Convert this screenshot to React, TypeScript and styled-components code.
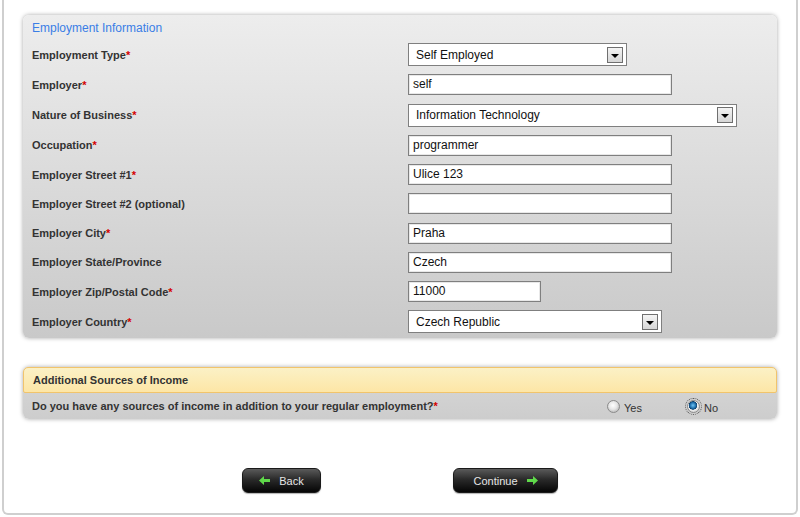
import styled, { createGlobalStyle } from "styled-components";

const GlobalStyle = createGlobalStyle`
    html, body {
        margin: 0;
        padding: 0;
        background: #ffffff;
        font-family: "Liberation Sans", Arial, sans-serif;
    }
`

const Frame = styled.div`
    margin: 0 2px;
    height: 515px;
    box-sizing: border-box;
    border: 2px solid #cfcfcf;
    border-top: none;
    border-radius: 0 0 6px 6px;
    padding: 15px 19px 0 19px;
    display: flex;
    flex-direction: column;
`

const Panel = styled.section`
    border-radius: 6px;
    box-shadow: 0 0 4px rgba(0, 0, 0, 0.35);
    background: linear-gradient(#ededed, #c9c9c9);
    padding: 0 0 5px 0;
`

const PanelTitle = styled.h2`
    margin: 0;
    padding: 5px 9px 6px 9px;
    height: 17px;
    font-size: 12px;
    font-weight: normal;
    color: #3a7ee6;
    line-height: 17px;
`

const FormGrid = styled.div`
    display: flex;
    flex-direction: column;
    gap: 8.25px;
    padding-left: 9px;
`

const FieldRow = styled.div`
    display: flex;
    align-items: center;
`

const Label = styled.label`
    width: 376px;
    flex-shrink: 0;
    font-size: 11px;
    font-weight: bold;
    color: #333333;
`

const Req = styled.span`
    color: #d40000;
`

const TextBox = styled.div<{ $width: number }>`
    width: ${p => p.$width}px;
    height: 21px;
    box-sizing: border-box;
    border: 1px solid #7f7f7f;
    box-shadow: inset 0 0 0 1px #e8e8e8;
    background: #ffffff;
    font-size: 12px;
    color: #111;
    padding: 0 4px;
    line-height: 19px;
`

const SelectBox = styled.div<{ $width: number }>`
    width: ${p => p.$width}px;
    height: 23px;
    box-sizing: border-box;
    border: 1px solid #7f7f7f;
    background: #ffffff;
    display: flex;
    align-items: center;
    justify-content: space-between;
    padding: 0 3px 0 7px;
    font-size: 12px;
    color: #111;
`

const DropButton = styled.span`
    width: 16px;
    height: 16px;
    box-sizing: border-box;
    border: 1px solid #6f6f6f;
    background: linear-gradient(#f4f4f4, #d6d6d6);
    display: flex;
    align-items: center;
    justify-content: center;
    &::after {
        content: "";
        margin-top: 2px;
        border-left: 4px solid transparent;
        border-right: 4px solid transparent;
        border-top: 4px solid #000;
    }
`

const IncomePanel = styled.section`
    margin-top: 29px;
    border-radius: 6px;
    box-shadow: 0 0 4px rgba(0, 0, 0, 0.35);
    background: linear-gradient(#d8d8d8, #cdcdcd);
`

const IncomeHeader = styled.div`
    height: 26px;
    box-sizing: border-box;
    border: 1px solid #f1c46c;
    border-radius: 5px 5px 2px 2px;
    background: linear-gradient(#fbf1c6, #fde6a6);
    padding: 0 9px;
    display: flex;
    align-items: center;
    font-size: 11px;
    font-weight: bold;
    color: #333;
`

const QuestionRow = styled.div`
    height: 26px;
    display: flex;
    align-items: center;
    padding: 0 9px;
    font-size: 11px;
    font-weight: bold;
    color: #333;
`

const Question = styled.span`
    flex: 1;
`

const RadioGroup = styled.div`
    display: flex;
    align-items: center;
    gap: 45px;
    margin-right: 50px;
    margin-top: 3px;
`

const RadioOption = styled.label`
    display: flex;
    align-items: center;
    gap: 4px;
    font-size: 11px;
    font-weight: normal;
    color: #333;
`

const RadioDot = styled.span<{ $checked: boolean }>`
    width: 13px;
    height: 13px;
    box-sizing: border-box;
    border-radius: 50%;
    border: 1px solid #8a8a8a;
    background: ${p => p.$checked
        ? "radial-gradient(circle at 45% 40%, #6fc4f5 0, #1a6aa8 3px, #0d3f6b 4px, #f2f2f2 4.5px, #dcdcdc 6px)"
        : "radial-gradient(circle at 45% 40%, #ffffff 0, #e6e6e6 4px, #c9c9c9 6px)"};
    outline: ${p => p.$checked ? "1px dotted #555" : "none"};
    outline-offset: 1px;
    margin-top: -3px;
`

const ButtonBar = styled.div`
    margin-top: 49px;
    display: flex;
    justify-content: center;
    gap: 132px;
`

const NavButton = styled.button<{ $width: number }>`
    width: ${p => p.$width}px;
    height: 25px;
    border: 1px solid #1a1a1a;
    border-radius: 6px;
    background: linear-gradient(#5a5a5a 0%, #2a2a2a 45%, #050505 100%);
    box-shadow: 0 1px 1px rgba(0, 0, 0, 0.3);
    color: #e6e6e6;
    font-family: "Liberation Sans", Arial, sans-serif;
    font-size: 11px;
    display: flex;
    align-items: center;
    justify-content: center;
    gap: 9px;
    padding: 0;
`

const Arrow = ({ dir }: { dir: "left" | "right" }) => (
    <svg width="11" height="9" viewBox="0 0 11 9">
        <path
            d={dir === "left" ? "M0 4.5 L5 0 V3 H11 V6 H5 V9 Z" : "M11 4.5 L6 0 V3 H0 V6 H6 V9 Z"}
            fill="#5fd94a"
        />
    </svg>
)

type Field = {
    label: string;
    required?: boolean;
    value: string;
    kind: "text" | "select";
    width: number;
}

const fields: Field[] = [
    { label: "Employment Type", required: true, value: "Self Employed", kind: "select", width: 219 },
    { label: "Employer", required: true, value: "self", kind: "text", width: 264 },
    { label: "Nature of Business", required: true, value: "Information Technology", kind: "select", width: 329 },
    { label: "Occupation", required: true, value: "programmer", kind: "text", width: 264 },
    { label: "Employer Street #1", required: true, value: "Ulice 123", kind: "text", width: 264 },
    { label: "Employer Street #2 (optional)", value: "", kind: "text", width: 264 },
    { label: "Employer City", required: true, value: "Praha", kind: "text", width: 264 },
    { label: "Employer State/Province", value: "Czech", kind: "text", width: 264 },
    { label: "Employer Zip/Postal Code", required: true, value: "11000", kind: "text", width: 133 },
    { label: "Employer Country", required: true, value: "Czech Republic", kind: "select", width: 254 },
]

function App() {
    return (
        <>
            <GlobalStyle />
            <Frame>
                <Panel>
                    <PanelTitle>Employment Information</PanelTitle>
                    <FormGrid>
                        {fields.map((f) => (
                            <FieldRow key={f.label}>
                                <Label>
                                    {f.label}
                                    {f.required && <Req>*</Req>}
                                </Label>
                                {f.kind === "select" ? (
                                    <SelectBox $width={f.width}>
                                        {f.value}
                                        <DropButton />
                                    </SelectBox>
                                ) : (
                                    <TextBox $width={f.width}>{f.value}</TextBox>
                                )}
                            </FieldRow>
                        ))}
                    </FormGrid>
                </Panel>

                <IncomePanel>
                    <IncomeHeader>Additional Sources of Income</IncomeHeader>
                    <QuestionRow>
                        <Question>
                            Do you have any sources of income in addition to your regular employment?<Req>*</Req>
                        </Question>
                        <RadioGroup>
                            <RadioOption><RadioDot $checked={false} />Yes</RadioOption>
                            <RadioOption><RadioDot $checked={true} />No</RadioOption>
                        </RadioGroup>
                    </QuestionRow>
                </IncomePanel>

                <ButtonBar>
                    <NavButton $width={79}>
                        <Arrow dir="left" />
                        Back
                    </NavButton>
                    <NavButton $width={105}>
                        Continue
                        <Arrow dir="right" />
                    </NavButton>
                </ButtonBar>
            </Frame>
        </>
    )
}

export default App;
